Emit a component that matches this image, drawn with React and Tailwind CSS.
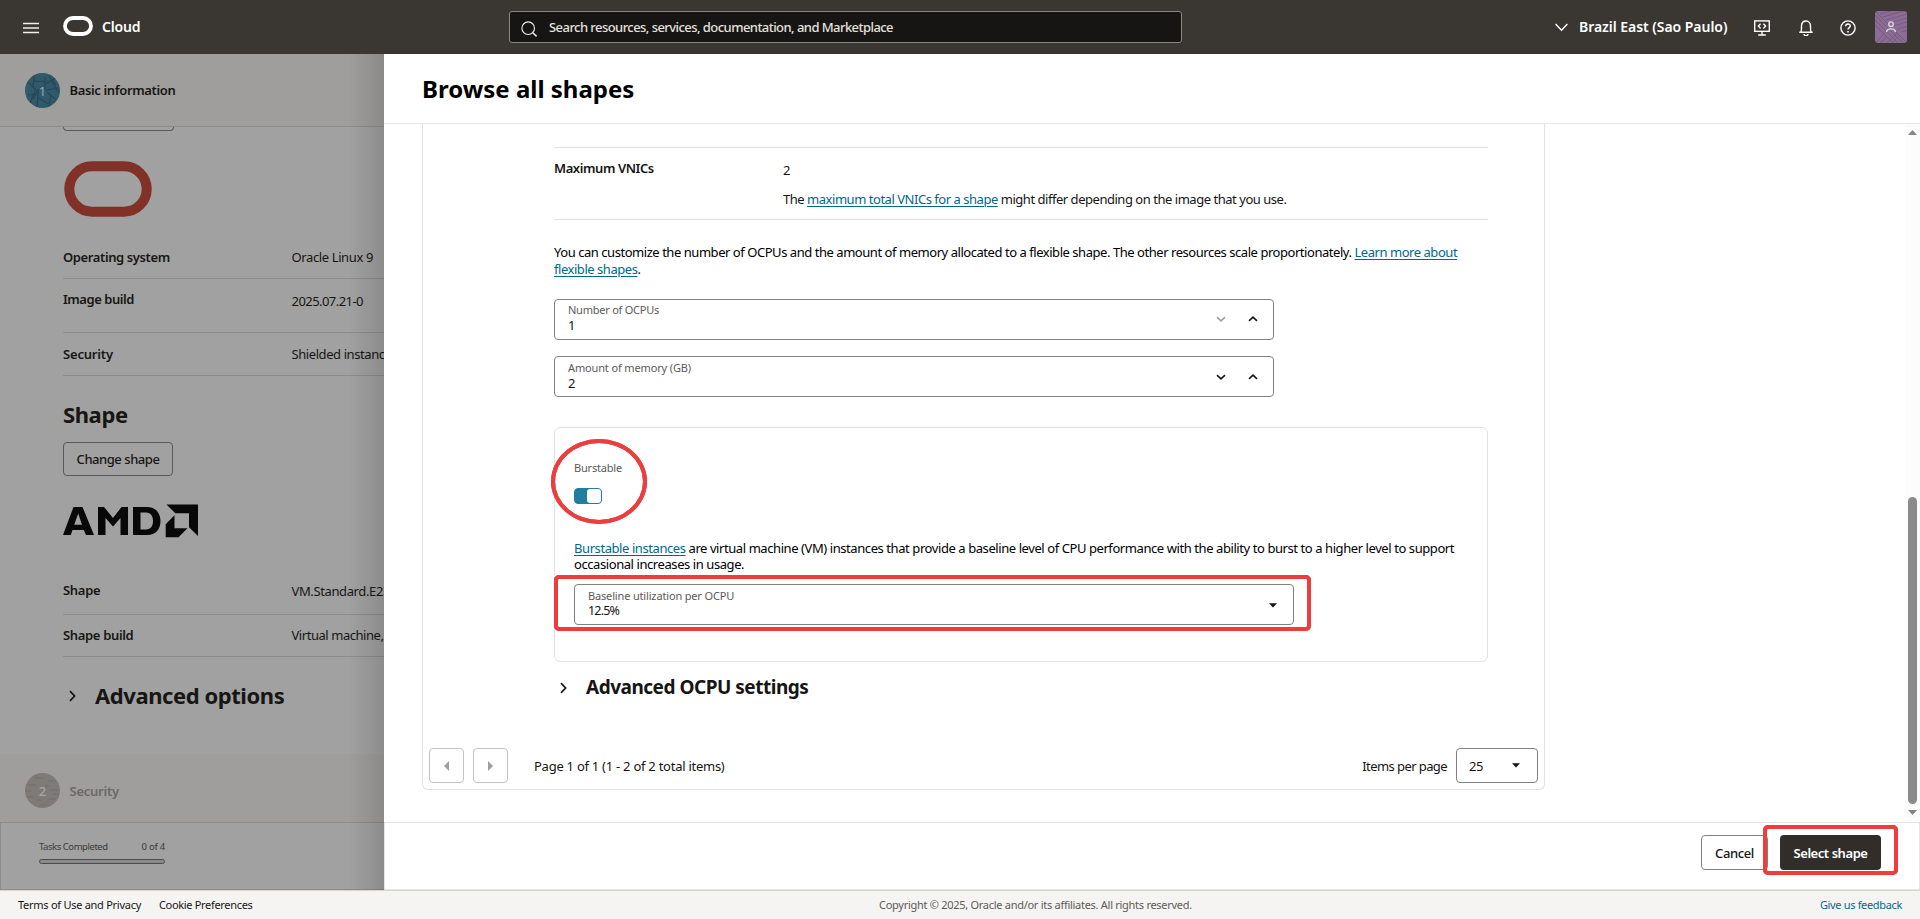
import React from "react";

const cx = (...c) => c.filter(Boolean).join(" ");

function Chevron({ dir, className }) {
  const d = {
    down: "M1 1.2 L5 4.8 L9 1.2",
    up: "M1 4.8 L5 1.2 L9 4.8",
  }[dir];
  return (
    <svg width="10" height="6" viewBox="0 0 10 6" fill="none" stroke="currentColor" strokeWidth="1.6" className={className}>
      <path d={d} />
    </svg>
  );
}

function ChevronRight({ className }) {
  return (
    <svg width="7" height="12" viewBox="0 0 7 12" fill="none" stroke="currentColor" strokeWidth="1.7" className={className}>
      <path d="M1 1.2 L5.6 6 L1 10.8" />
    </svg>
  );
}

function Caret({ className }) {
  return (
    <svg width="8" height="5" viewBox="0 0 8 5" fill="currentColor" className={className}>
      <path d="M0 0.3 H8 L4 4.6 Z" />
    </svg>
  );
}

function TopBar() {
  return (
    <header className="flex h-[54px] shrink-0 items-start bg-[#3a3631] text-white">
      <svg width="16" height="13" viewBox="0 0 16 13" className="mt-[22px] ml-[23px]" stroke="#f1efed" strokeWidth="1.4">
        <path d="M0 1.5H16M0 6H16M0 10.5H16" />
      </svg>
      <svg width="30" height="20" viewBox="0 0 30 20" fill="none" className="mt-4 ml-6">
        <rect x="2" y="2" width="26" height="16" rx="8" stroke="#fff" strokeWidth="3.8" />
      </svg>
      <span className="mt-[17px] ml-[9px] w-[51px] text-[14px] leading-5 font-semibold tracking-[-0.15px]">Cloud</span>
      <div className="mt-[11px] ml-[356px] flex h-8 w-[673px] items-start rounded-[3px] border border-[#8b8986] bg-[#161513]">
        <svg width="17" height="17" viewBox="0 0 17 17" fill="none" stroke="#f1efed" strokeWidth="1.1" className="mt-[9px] ml-[11px]">
          <circle cx="7.2" cy="7.2" r="6.3" />
          <path d="M11.8 11.8 L15.6 15.4" strokeWidth="1.5" />
        </svg>
        <span className="mt-[6px] ml-[11px] text-[13px] leading-[18px] font-medium tracking-[-0.555px] whitespace-nowrap text-[#e4e2df]">
          Search resources, services, documentation, and Marketplace
        </span>
      </div>
      <svg width="13" height="9" viewBox="0 0 13 9" fill="none" stroke="#fff" strokeWidth="1.4" className="mt-[23px] ml-[373px]">
        <path d="M0.6 1 L6.5 7.2 L12.4 1" />
      </svg>
      <span className="mt-[17px] ml-[11px] w-[149px] text-[14px] leading-5 font-semibold tracking-[-0.04px] whitespace-nowrap">
        Brazil East (Sao Paulo)
      </span>
      <svg width="16" height="16" viewBox="0 0 16 16" fill="none" stroke="#fff" strokeWidth="1.4" className="mt-5 ml-[26px]">
        <rect x="0.7" y="0.9" width="14.6" height="10.4" />
        <path d="M6.6 3.8 L4.4 6.1 L6.6 8.4 M9.4 3.8 L11.6 6.1 L9.4 8.4 M8 11.3 V15 M4.2 15 H11.8" />
      </svg>
      <svg width="14" height="16" viewBox="0 0 14 16" fill="none" stroke="#fff" strokeWidth="1.4" className="mt-5 ml-[29px]">
        <path d="M0.3 12.2 H13.7 M2 12.2 C2.6 10.5 2.5 9 2.5 6 C2.5 3 4.3 1 7 1 C9.7 1 11.5 3 11.5 6 C11.5 9 11.4 10.5 12 12.2" />
        <path d="M5 14 A2 1.6 0 0 0 9 14" />
      </svg>
      <svg width="16" height="16" viewBox="0 0 16 16" fill="none" stroke="#fff" strokeWidth="1.4" className="mt-5 ml-[27px]">
        <circle cx="8" cy="8" r="7.1" />
        <path d="M5.7 6.2 C5.7 3.3 10.3 3.3 10.3 6 C10.3 7.6 8 7.6 8 9.6" />
        <path d="M8 10.9 V12.4" strokeWidth="1.6" />
      </svg>
      <svg width="32" height="32" viewBox="0 0 32 32" className="mt-[11px] ml-[19px] rounded-[3px]">
        <rect width="32" height="32" fill="#8a6c95" />
        <g stroke="#785b82" strokeWidth="1" fill="none">
          <path d="M5 3 L22 -2 M8 6 L32 -1 M11 9 L32 3 M14 12 L32 7 M18 15 L32 11 M22 18 L32 15.5 M26 21 L32 19.5" />
          <path d="M-2 2 L28 32 M-2 7 L23 32 M-2 12 L18 32 M1 1 L32 32" />
          <path d="M12 32 L22 22 M17 32 L25 24 M0 32 L9 23 M5 32 L12 26" />
        </g>
        <g stroke="#e3dae6" strokeWidth="1.3" fill="none">
          <circle cx="16" cy="13.2" r="2.3" />
          <path d="M11.6 21 C11.8 16.9 20.2 16.9 20.4 21" />
        </g>
      </svg>
    </header>
  );
}

function InfoRow({ label, value, className, labelClass, valueClass }) {
  return (
    <div className={cx("flex w-[560px] shrink-0 items-start border-b border-[#8b8b8b] text-[13px] leading-[18px] text-[#171614]", className)}>
      <span className={cx("w-[228.5px] shrink-0 font-semibold", labelClass)}>{label}</span>
      <span className={cx("whitespace-nowrap", valueClass)}>{value}</span>
    </div>
  );
}

function StepHeader({ n, title, active, className }) {
  return (
    <div className={cx("flex w-[384px] shrink-0 items-start bg-[#a09e9c] pl-[25px]", className)}>
      <div className="relative size-[35px] shrink-0">
        <svg width="35" height="35" viewBox="0 0 35 35" className="absolute inset-0 rounded-full">
          <rect width="35" height="35" fill={active ? "#30596b" : "#7e7a77"} />
          {active ? (
            <path
              d="M3 9 L14 20 M9 3 L8 13 M9 8 L20 9 M20 4 V16 M20 11 L31 5 M24 3 L31 12 M27 9 L34 20 M21 17 L34 15 M22 19 L31 27 M26 22 L24 33 M3 22 L13 21 L12 34 M5 30 L10 18 M14 25 L23 31 M14 16 L8 26"
              stroke="#274653"
              strokeWidth="1.2"
              fill="none"
            />
          ) : (
            <path
              d="M10 5 H18 M23 8 H31 M3 12 H11 M20 13 H24 M1 18 H6 M25 17 H33 M2 24 H8 M12 27 H18 M24 26 H31 M14 32 H22 M28 21 H34"
              stroke="#726e6c"
              strokeWidth="1"
              fill="none"
            />
          )}
        </svg>
        <span className={cx("absolute inset-0 text-center text-[13px] leading-[36px]", active ? "text-[#8fa9bd]" : "font-medium text-[#a9a6a4]")}>
          {n}
        </span>
      </div>
      <span
        className={cx(
          "ml-[9.5px] text-[13px] font-semibold",
          active ? "leading-[35px] tracking-[-0.36px] text-[#171614]" : "leading-[37px] tracking-[-0.25px] text-[#6c6967]"
        )}
      >
        {title}
      </span>
    </div>
  );
}

function Background() {
  return (
    <aside className="relative flex w-[384px] shrink-0 flex-col overflow-hidden bg-[#a1a1a1] text-[#171614]">
      <StepHeader n="1" title="Basic information" active className="h-[73px] border-b border-[#8f8c89] pt-[19px]" />
      <div className="flex h-[627px] shrink-0 flex-col items-start overflow-hidden pl-[63px]">
        <div className="h-[4px] w-[111px] shrink-0 rounded-b-[4px] border border-t-0 border-[#5b5a59]" />
        <svg width="88" height="56" viewBox="0 0 88 56" fill="none" className="mt-[30px] ml-[1px] shrink-0">
          <rect x="5.3" y="5.3" width="77.4" height="45.4" rx="22.7" stroke="#813127" strokeWidth="10" />
        </svg>
        <InfoRow label="Operating system" value="Oracle Linux 9" className="mt-[31px] h-[31px]" labelClass="tracking-[-0.39px]" valueClass="tracking-[-0.38px]" />
        <InfoRow label="Image build" value="2025.07.21-0" className="h-[54px] pt-[11px]" labelClass="tracking-[-0.46px]" valueClass="mt-[2px] tracking-[-0.55px]" />
        <InfoRow label="Security" value="Shielded instance" className="h-[43px] pt-[12px]" labelClass="tracking-[-0.18px]" valueClass="tracking-[-0.42px]" />
        <h2 className="mt-[21px] text-[22px] leading-[34px] font-bold tracking-[-0.4px]">Shape</h2>
        <div className="mt-[11px] flex h-[34px] w-[110px] shrink-0 items-center justify-center rounded-[4px] border border-[#5b5a59] pt-[2px] text-[13px] font-medium tracking-[-0.46px]">
          Change shape
        </div>
        <svg width="135" height="34" viewBox="0 0 135 34" fill="#080808" className="mt-[28px] shrink-0">
          <path fillRule="evenodd" d="M0 31 L10.5 3 H19.5 L31 31 H23 L20.8 26 H9.5 L7.8 31 Z M15.2 9.5 L11.2 20.8 H19 Z" />
          <path d="M35 31 V3 H41 L50 14 L58.5 3 H65 V31 H57.5 V14 L50 22.5 L42.5 14 V31 Z" />
          <path fillRule="evenodd" d="M70 3 H84 C93 3 97.5 9.5 97.5 17 C97.5 25 93 31 84 31 H70 Z M77.5 8.5 V25.5 H83 C88 25.5 90 21.5 90 17 C90 12.5 88 8.5 83 8.5 Z" />
          <path d="M103.5 0.5 H135 V32 L126 23.3 V9.3 H112.3 Z" />
          <path d="M111.5 11.3 V24.3 H124.5 L115.5 33.3 H102.7 V20.3 Z" />
        </svg>
        <InfoRow label="Shape" value="VM.Standard.E2.1.Micro" className="mt-[43px] h-[34px]" labelClass="tracking-[-0.3px]" valueClass="mt-[1px] tracking-[-0.38px]" />
        <InfoRow label="Shape build" value="Virtual machine, 1 core OCPU" className="h-[42px] pt-[11px]" labelClass="tracking-[-0.34px]" valueClass="tracking-[-0.45px]" />
        <div className="mt-[21px] flex items-center">
          <ChevronRight className="ml-[6px] mt-[2px]" />
          <h2 className="ml-[19px] text-[22px] leading-[34px] font-bold tracking-[-0.43px] whitespace-nowrap">Advanced options</h2>
        </div>
      </div>
      <StepHeader n="2" title="Security" className="h-[68px] pt-[19px]" />
      <div className="h-[68px] shrink-0 border border-r-0 border-[#8c8c8c] pl-[38px] text-[#3c3b3a]">
        <div className="mt-[17px] flex w-[126px] justify-between text-[9.5px] leading-[14px]">
          <span className="tracking-[-0.45px]">Tasks Completed</span>
          <span className="tracking-[-0.2px]">0 of 4</span>
        </div>
        <div className="mt-[5px] h-[5px] w-[126px] rounded-[3px] border border-[#4c4b4a] bg-[#8a8a8a]" />
      </div>
      <div className="absolute inset-y-0 right-0 w-[36px] bg-linear-to-r from-transparent to-black/13" />
    </aside>
  );
}

function Link({ children }) {
  return <a className="text-[#00688c] underline decoration-1 underline-offset-2">{children}</a>;
}

function NumberField({ label, value, disabledDown, className, pad, iconPad, track }) {
  return (
    <div className={cx("flex h-[41px] w-[720px] items-start justify-between rounded-[4px] border border-[#83817f]", className)}>
      <div className={cx("ml-[13px]", pad)}>
        <div className={cx("text-[11px] leading-[15px] text-[#5c5a58]", track)}>{label}</div>
        <div className="text-[13px] leading-[16px] text-[#161513]">{value}</div>
      </div>
      <div className={cx("mr-[15px] flex gap-[22px] text-[#161513]", iconPad)}>
        <Chevron dir="down" className={disabledDown ? "text-[#a09e9c]" : ""} />
        <Chevron dir="up" />
      </div>
    </div>
  );
}

function ShapeDetails() {
  return (
    <div className="ml-[38px] flex h-[666px] w-[1123px] shrink-0 flex-col rounded-b-[6px] border border-t-0 border-[#e3e2e1]">
      <div className="ml-[131px] flex w-[934px] flex-col text-[13px] text-[#161513]">
        <div className="mt-[23px] flex h-[73px] border-y border-[#e3e2e1] leading-[18px]">
          <span className="mt-[11px] w-[229px] font-semibold tracking-[-0.42px]">Maximum VNICs</span>
          <div className="mt-[13px]">
            <div>2</div>
            <div className="mt-[11px] tracking-[-0.469px] whitespace-nowrap">
              The <Link>maximum total VNICs for a shape</Link> might differ depending on the image that you use.
            </div>
          </div>
        </div>
        <p className="mt-[24px] leading-[17px] tracking-[-0.455px] whitespace-nowrap text-black">
          You can customize the number of OCPUs and the amount of memory allocated to a flexible shape. The other resources scale proportionately.{" "}
          <Link>
            Learn more about
            <br />
            flexible shapes
          </Link>
          .
        </p>
        <NumberField label="Number of OCPUs" value="1" disabledDown className="mt-[21px]" pad="mt-[2px]" iconPad="mt-[16px]" track="tracking-[-0.24px]" />
        <NumberField label="Amount of memory (GB)" value="2" className="mt-[16px]" pad="mt-[3px]" iconPad="mt-[17px]" track="tracking-[-0.14px]" />
        <div className="relative mt-[30px] h-[235px] rounded-[6px] border border-[#e3e2e1] pl-[19px]">
          <div className="mt-[32px] text-[11px] leading-[15px] tracking-[-0.19px] text-[#5c5a58]">Burstable</div>
          <div className="mt-[13px] flex h-4 w-7 justify-end rounded-[4px] border border-[#227e9e] bg-[#227e9e]">
            <div className="size-[14px] rounded-[3px] bg-white" />
          </div>
          <p className="mt-[36px] leading-4 tracking-[-0.422px] whitespace-nowrap text-black">
            <Link>Burstable instances</Link> are virtual machine (VM) instances that provide a baseline level of CPU performance with the ability to burst to a higher level to support
            <br />
            occasional increases in usage.
          </p>
          <div className="mt-[12px] flex h-[41px] w-[720px] items-start justify-between rounded-[4px] border border-[#83817f]">
            <div className="mt-[3px] ml-[13px]">
              <div className="text-[11px] leading-[15px] tracking-[-0.16px] text-[#5c5a58]">Baseline utilization per OCPU</div>
              <div className="text-[12.5px] leading-4 tracking-[-0.8px] text-[#161513]">12.5%</div>
            </div>
            <Caret className="mt-[18px] mr-[16px]" />
          </div>
          <div className="absolute top-[11px] left-[-4px] h-[85px] w-[96px] rounded-[50%] border-4 border-[#f03c3c] drop-shadow-[0_0.5px_0.5px_rgba(0,0,0,0.55)]" />
          <div className="absolute top-[147px] left-[-1px] h-[56px] w-[757px] rounded-[5px] border-4 border-[#f03c3c] drop-shadow-[0_0.5px_0.5px_rgba(0,0,0,0.55)]" />
        </div>
        <div className="mt-[11px] flex items-center">
          <ChevronRight className="mt-[1px] ml-[6px]" />
          <h3 className="ml-[19px] text-[19px] leading-[28px] font-bold tracking-[-0.49px]">Advanced OCPU settings</h3>
        </div>
      </div>
      <div className="mt-[47px] flex h-[35px] items-center pr-[6px] pl-[6px] text-[13px] text-[#161513]">
        <div className="flex size-[35px] items-center justify-center rounded-[4px] border border-[#c5c3c1]">
          <svg width="5" height="10" viewBox="0 0 5 10" fill="#a09e9c">
            <path d="M5 0 V10 L0 5 Z" />
          </svg>
        </div>
        <div className="ml-[9px] flex size-[35px] items-center justify-center rounded-[4px] border border-[#c5c3c1]">
          <svg width="5" height="10" viewBox="0 0 5 10" fill="#a09e9c">
            <path d="M0 0 V10 L5 5 Z" />
          </svg>
        </div>
        <span className="mt-[2px] ml-[26px] tracking-[-0.258px]">Page 1 of 1 (1 - 2 of 2 total items)</span>
        <span className="mt-[2px] mr-[9px] ml-auto tracking-[-0.585px]">Items per page</span>
        <div className="flex h-[35px] w-[82px] items-center justify-between rounded-[4px] border border-[#83817f] pr-[17px] pl-[12px]">
          <span className="mt-[2px] tracking-[-0.4px]">25</span>
          <Caret />
        </div>
      </div>
    </div>
  );
}

function Scrollbar() {
  return (
    <div className="flex h-full w-[15px] flex-col items-center bg-[#fcfcfc]">
      <svg width="9" height="5" viewBox="0 0 9 5" fill="#858585" className="mt-[6px] shrink-0">
        <path d="M0 5 L4.5 0 L9 5 Z" />
      </svg>
      <div className="mt-[362px] h-[307px] w-[9px] shrink-0 rounded-full bg-[#8b8b8b]" />
      <svg width="9" height="5" viewBox="0 0 9 5" fill="#858585" className="mt-[6px] shrink-0">
        <path d="M0 0 L4.5 5 L9 0 Z" />
      </svg>
    </div>
  );
}

function Drawer() {
  return (
    <main className="flex w-[1536px] flex-col bg-white">
      <div className="h-[70px] shrink-0 border-b border-[#e5e5e4] pl-[38px]">
        <h1 className="mt-[18px] text-[24px] leading-[34px] font-bold text-black">Browse all shapes</h1>
      </div>
      <div className="flex h-[698px] shrink-0 justify-between">
        <ShapeDetails />
        <Scrollbar />
      </div>
      <div className="flex h-[68px] shrink-0 items-start justify-end border border-[#e5e5e4] pr-[38px]">
        <div className="mt-[12px] flex h-[35px] w-[67px] items-center justify-center rounded-[4px] border border-[#83817f] pt-[2px] text-[13px] font-medium tracking-[-0.37px] text-[#161513]">
          Cancel
        </div>
        <div className="relative mt-[12px] ml-[12px] flex h-[35px] w-[101px] items-center justify-center rounded-[4px] bg-[#312d2a] pt-[2px] text-[13px] font-semibold tracking-[-0.44px] whitespace-nowrap text-white">
          Select shape
          <div className="absolute top-[-10px] left-[-17px] h-[50px] w-[135px] rounded-[5px] border-4 border-[#f03c3c] drop-shadow-[0_0.5px_0.5px_rgba(0,0,0,0.55)]" />
        </div>
      </div>
    </main>
  );
}

export default function App() {
  return (
    <div className="flex h-[919px] w-[1920px] flex-col overflow-hidden bg-white font-['Noto_Sans','Open_Sans',sans-serif]">
      <TopBar />
      <div className="flex h-[836px] shrink-0">
        <Background />
        <Drawer />
      </div>
      <footer className="flex h-[29px] shrink-0 items-center border-t border-[#d6d5d4] bg-[#f5f4f2] pr-[18px] pl-[18px] text-[11px] text-[#161513]">
        <div className="flex w-[861px] gap-[18px] whitespace-nowrap">
          <span className="tracking-[-0.27px]">Terms of Use and Privacy</span>
          <span className="tracking-[-0.32px]">Cookie Preferences</span>
        </div>
        <span className="tracking-[-0.28px] text-[#5c5a58]">Copyright © 2025, Oracle and/or its affiliates. All rights reserved.</span>
        <span className="ml-auto tracking-[-0.34px] text-[#00688c]">Give us feedback</span>
      </footer>
    </div>
  );
}
